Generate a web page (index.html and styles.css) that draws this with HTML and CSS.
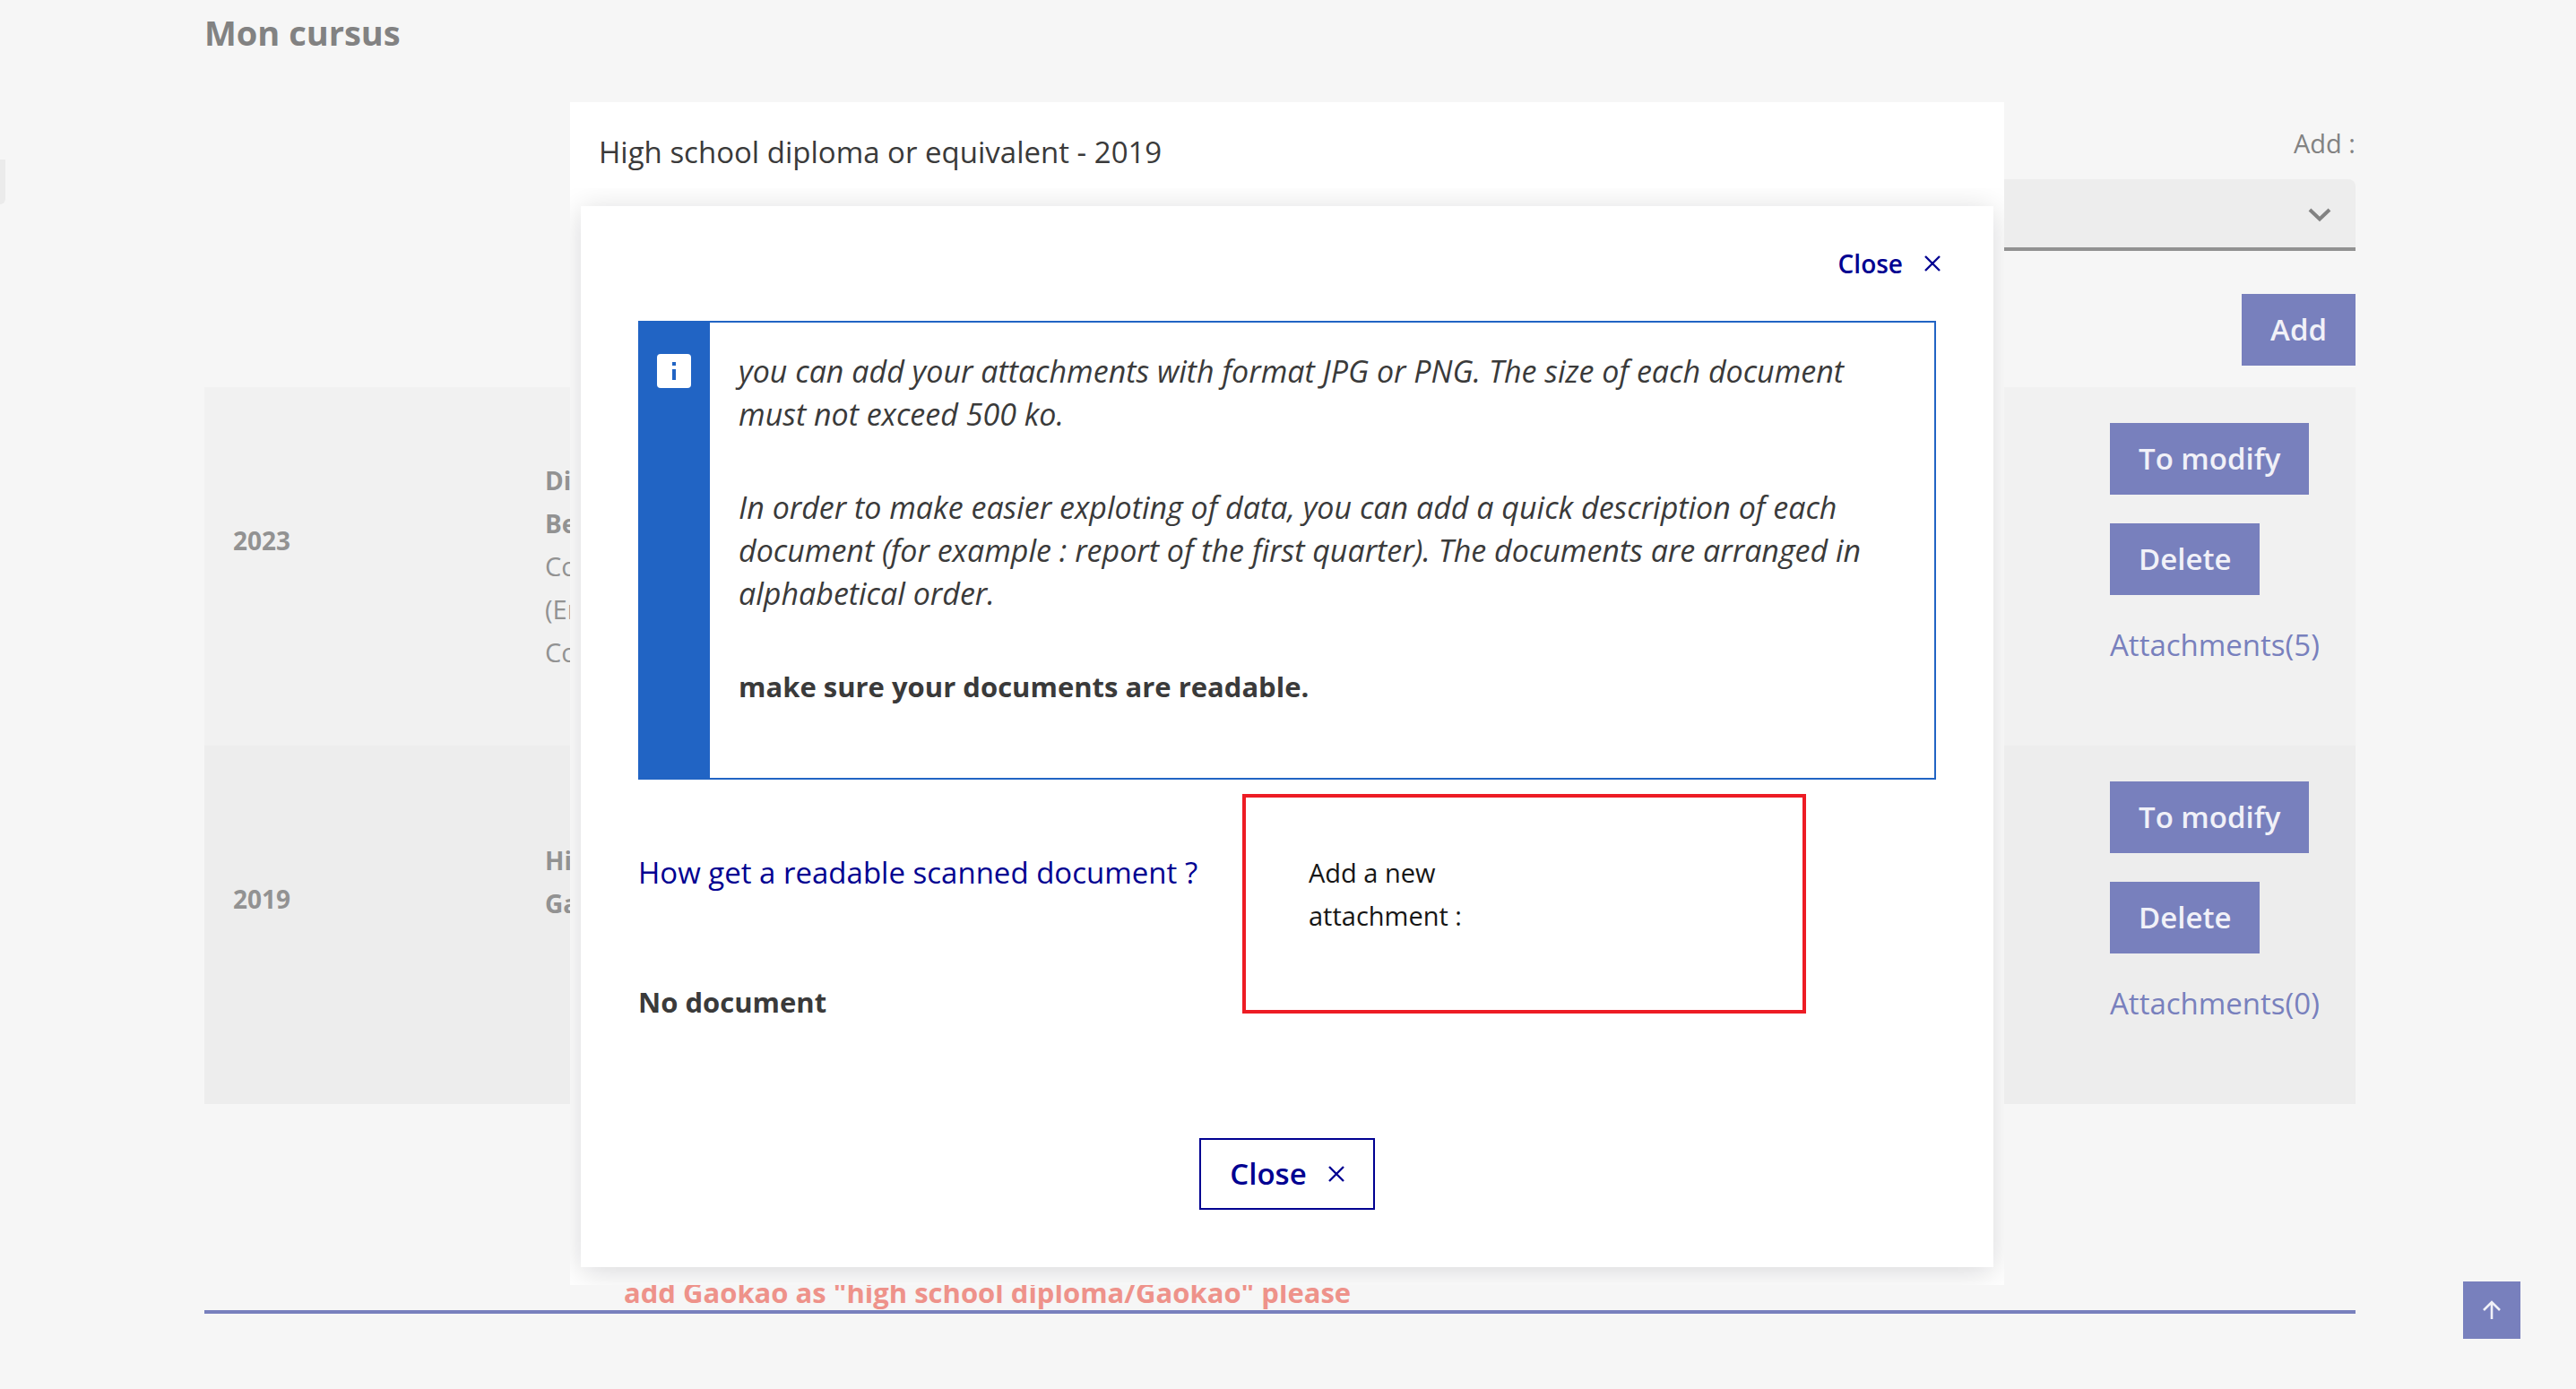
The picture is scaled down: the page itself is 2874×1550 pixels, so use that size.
FILE: index.html
```html
<!DOCTYPE html>
<html lang="en">
<head>
  <meta charset="utf-8">
  <meta name="viewport" content="width=device-width, initial-scale=1">
  <title>Mon cursus</title>
  <link rel="stylesheet" href="styles.css">
</head>
<body>
  <div class="side-tab"></div>

  <main class="page">
    <h1 class="page-title">Mon cursus</h1>

    <form class="add-form">
      <label class="add-label" for="cursus-type">Add :</label>
      <div class="select-wrap">
        <select class="select" id="cursus-type"><option></option></select>
        <svg class="select-arrow" viewBox="0 0 26 16" aria-hidden="true"><path d="M2 2l11 10.500L24 2" fill="none" stroke="currentColor" stroke-width="4"/></svg>
      </div>
      <button class="btn" type="button">Add</button>
    </form>

    <table class="cursus">
      <tbody>
        <tr>
          <th class="year" scope="row">2023</th>
          <td class="details"><b>Di</b><br><b>Be</b><br>Co<br>(En<br>Co</td>
          <td class="actions">
            <div class="action-list">
              <button class="btn" type="button">To modify</button>
              <button class="btn" type="button">Delete</button>
              <a class="attachments" href="#attachments-2023">Attachments(5)</a>
            </div>
          </td>
        </tr>
        <tr>
          <th class="year" scope="row">2019</th>
          <td class="details details-short"><b>Hi</b><br><b>Ga</b></td>
          <td class="actions">
            <div class="action-list">
              <button class="btn" type="button">To modify</button>
              <button class="btn" type="button">Delete</button>
              <a class="attachments" href="#attachments-2019">Attachments(0)</a>
            </div>
          </td>
        </tr>
      </tbody>
    </table>

    <p class="notice">add Gaokao as "high school diploma/Gaokao" please</p>
  </main>

  <a class="to-top" href="#" aria-label="Back to top">
    <svg class="to-top-icon" viewBox="0 0 22 22" aria-hidden="true"><path d="M11 21V2.500M2 11l9-9 9 9" fill="none" stroke="currentColor" stroke-width="2.600"/></svg>
  </a>

  <div class="overlay">
    <section class="modal" role="dialog" aria-labelledby="modal-title">
      <h2 class="modal-title" id="modal-title">High school diploma or equivalent - 2019</h2>
      <div class="modal-scroll">
        <div class="panel">
          <button class="close-link" type="button">Close
            <svg class="close-icon" viewBox="0 0 18 18" aria-hidden="true"><path d="M1 1l16 16M17 1L1 17" fill="none" stroke="currentColor" stroke-width="2.400"/></svg>
          </button>

          <div class="alert">
            <div class="alert-side">
              <svg class="alert-icon" viewBox="0 0 38 38" aria-hidden="true"><rect width="38" height="38" rx="4" fill="#fff"/><path d="M17 9h4v4h-4zM17 17h4v12h-4z" fill="#2164c4"/></svg>
            </div>
            <div class="alert-text">
              <p class="alert-info">you can add your attachments with format JPG or PNG. The size of each document must not exceed 500 ko.</p>
              <p class="alert-info">In order to make easier exploting of data, you can add a quick description of each document (for example : report of the first quarter). The documents are arranged in alphabetical order.</p>
              <p class="strong">make sure your documents are readable.</p>
            </div>
          </div>

          <div class="documents">
            <div class="documents-main">
              <a class="help-link" href="#help">How get a readable scanned document ?</a>
              <p class="strong">No document</p>
            </div>
            <div class="new-attachment">
              <p class="new-label">Add a new attachment :</p>
            </div>
          </div>

          <button class="btn-outline" type="button">Close
            <svg class="close-icon" viewBox="0 0 18 18" aria-hidden="true"><path d="M1 1l16 16M17 1L1 17" fill="none" stroke="currentColor" stroke-width="2.400"/></svg>
          </button>
        </div>
      </div>
    </section>
  </div>
</body>
</html>
```

FILE: styles.css
```css
* {
  box-sizing: border-box;
}

body {
  margin: 0;
  background: #f6f6f6;
  color: #3a3a3a;
  font-family: "Open Sans", "Noto Sans", sans-serif;
  font-size: 33px;
  line-height: 48px;
}

h1, h2, p {
  margin: 0;
}

button, select {
  font: inherit;
}

a {
  text-decoration: none;
}

.strong {
  font-size: 31px;
  font-weight: 700;
}

/* Page behind the dialog */

.page {
  max-width: 2400px;
  margin: 0 auto;
  padding-top: 8px;
  position: relative;
  right: 9px;
}

.page-title {
  margin-bottom: 72px;
  color: #828282;
  font-size: 38px;
  font-weight: 700;
  line-height: 56px;
}

.side-tab {
  position: fixed;
  left: 0;
  top: 178px;
  width: 6px;
  height: 50px;
  border-radius: 0 0 6px 0;
  background: #ebebeb;
}

.add-form {
  display: flex;
  flex-direction: column;
  align-items: flex-end;
}

.add-label {
  margin-bottom: 16px;
  color: #828282;
  font-size: 29px;
}

.select-wrap {
  display: grid;
  align-items: center;
  width: 50%;
  margin-bottom: 48px;
}

.select {
  grid-area: 1 / 1;
  width: 100%;
  height: 80px;
  border: 0;
  border-bottom: 4px solid #929292;
  border-radius: 8px 8px 0 0;
  background: #ededed;
  appearance: none;
}

.select-arrow {
  grid-area: 1 / 1;
  justify-self: end;
  width: 26px;
  height: 16px;
  margin-right: 27px;
  color: #828282;
  pointer-events: none;
}

.btn {
  height: 80px;
  padding: 0 32px;
  border: 0;
  background: #7880bd;
  color: #f1f1f8;
  font-weight: 600;
}

.cursus {
  width: 100%;
  margin-top: 24px;
  border-collapse: collapse;
  table-layout: fixed;
  color: #929292;
  font-size: 29px;
}

.cursus tr {
  height: 400px;
  background: #f1f1f1;
}

.cursus tr:nth-child(even) {
  background: #ededed;
}

.cursus th,
.cursus td {
  padding: 0 32px;
  text-align: left;
}

.cursus b,
.cursus .year {
  font-size: 28px;
  font-weight: 700;
}

.cursus .year {
  width: 348px;
  padding-bottom: 58px;
}

.cursus .details-short {
  padding-bottom: 96px;
}

.cursus .actions {
  width: 306px;
  padding: 40px 0 0 32px;
  font-size: 33px;
  vertical-align: top;
}

.action-list {
  display: flex;
  flex-direction: column;
  align-items: flex-start;
  gap: 32px;
}

.attachments {
  color: #7880bd;
}

.notice {
  margin-top: 190px;
  padding-left: 468px;
  border-bottom: 4px solid #7880bd;
  box-shadow: 0 2px #e6e6e6;
  color: #ee928a;
  font-size: 31px;
  font-weight: 700;
  line-height: 40px;
}

.to-top {
  position: fixed;
  right: 62px;
  bottom: 56px;
  display: grid;
  place-items: center;
  width: 64px;
  height: 64px;
  background: #7880bd;
  color: #f1f1f8;
}

.to-top-icon {
  width: 22px;
  height: 22px;
}

/* Attachments dialog */

.overlay {
  position: fixed;
  inset: 0;
  padding: 114px 2px 0 0;
}

.modal {
  max-width: 1600px;
  margin: 0 auto;
  background: #fff;
}

.modal-title {
  padding: 32px 32px 16px;
  font-size: 33px;
  font-weight: 400;
}

.modal-scroll {
  overflow: hidden;
  padding: 20px 12px;
}

.panel {
  display: flex;
  flex-direction: column;
  padding: 40px 64px 64px;
  background: #fff;
  box-shadow: 0 5px 32px rgba(0, 0, 18, 0.16);
}

.close-link,
.btn-outline {
  display: flex;
  align-items: center;
  gap: 24px;
  background: none;
  color: #000091;
  font-weight: 600;
}

.close-link {
  align-self: flex-end;
  height: 48px;
  margin-bottom: 40px;
  margin-right: -16px;
  padding: 0 11px;
  border: 0;
  font-size: 28px;
}

.btn-outline {
  align-self: center;
  height: 80px;
  padding: 0 32px;
  border: 2px solid #000091;
}

.close-icon {
  width: 18px;
  height: 18px;
}

.alert {
  display: flex;
  border: 2px solid #2164c4;
}

.alert-side {
  flex: none;
  width: 78px;
  padding: 35px 19px;
  background: #2164c4;
}

.alert-icon {
  display: block;
  width: 38px;
  height: 38px;
}

.alert-text {
  display: flex;
  flex-direction: column;
  gap: 56px;
  padding: 30px 64px 78px 32px;
}

.alert-info {
  font-size: 34px;
  font-style: italic;
}

.documents {
  display: grid;
  grid-template-columns: 674px 629px;
  margin: 16px 0 128px;
}

.documents-main {
  display: flex;
  flex-direction: column;
  gap: 96px;
  padding-top: 64px;
}

.help-link {
  color: #000091;
}

.new-attachment {
  align-self: start;
  height: 245px;
  padding: 60px 70px;
  border: 4px solid #ed1c24;
}

.new-label {
  max-width: 200px;
  color: #161616;
  font-size: 29px;
}
```
